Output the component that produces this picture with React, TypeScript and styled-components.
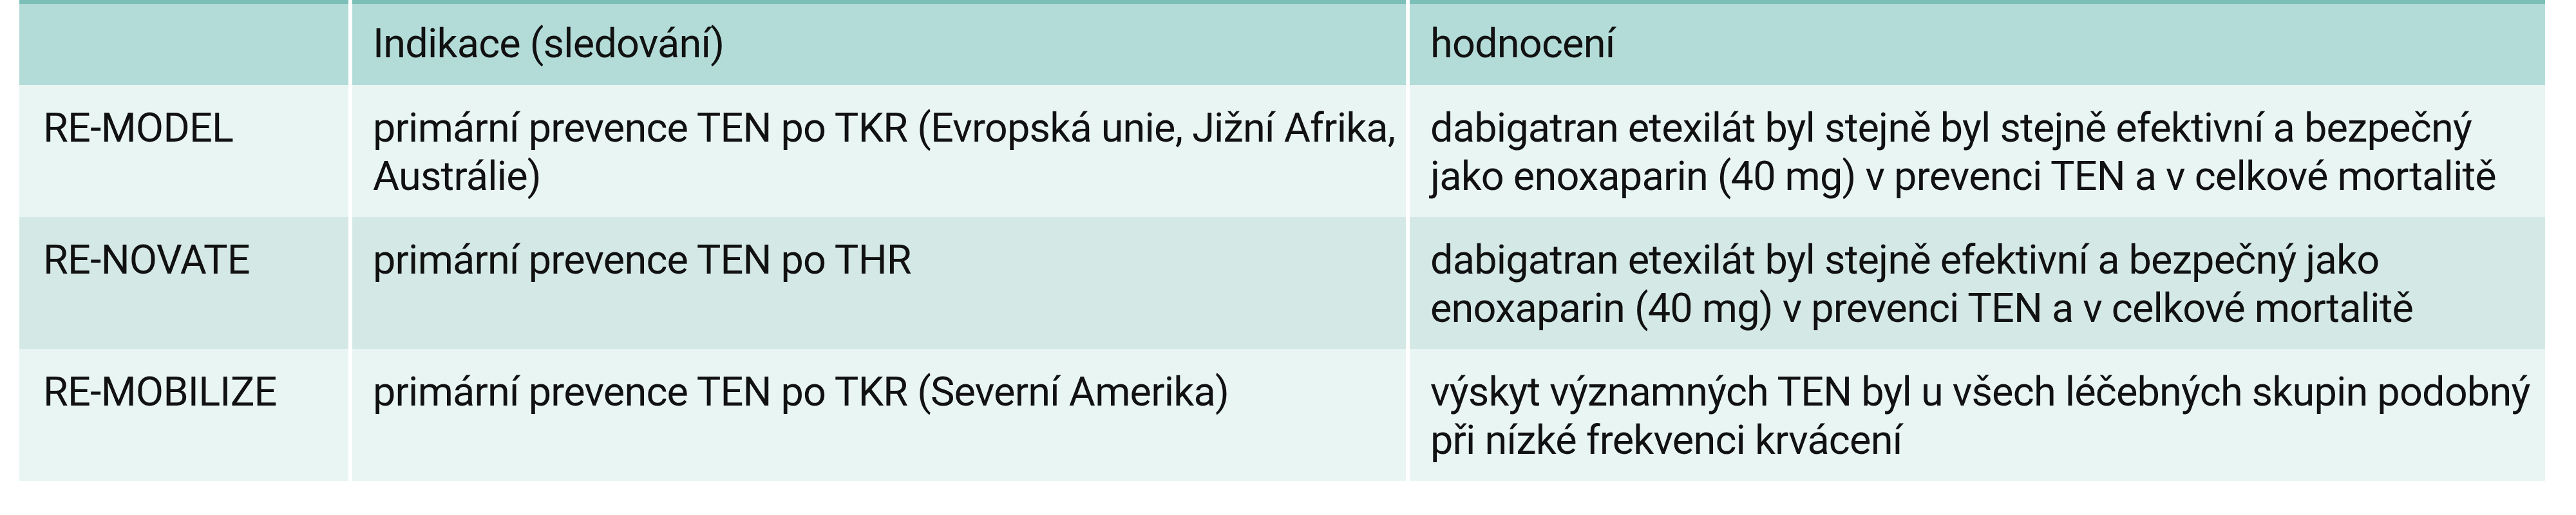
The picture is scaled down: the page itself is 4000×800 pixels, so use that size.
import React from "react";
import styled, { createGlobalStyle } from "styled-components";

const GlobalStyle = createGlobalStyle`
  html, body {
    margin: 0;
    padding: 0;
    background: #ffffff;
  }
`;

const Page = styled.div`
  width: 4000px;
  height: 800px;
  padding-left: 30px;
  box-sizing: border-box;
  font-family: Roboto, "Liberation Sans", sans-serif;
  font-size: 63px;
  letter-spacing: -0.8px;
  line-height: 75px;
  color: #111111;
`;

const Table = styled.div`
  width: 3922px;
  display: flex;
  flex-direction: column;
`;

const Row = styled.div`
  display: grid;
  grid-template-columns: 511px 1636px 1763px;
  column-gap: 6px;
  background: #ffffff;
`;

type Tone = "head" | "light" | "dark";

const tones: Record<Tone, string> = {
  head: "#b3dcd8",
  light: "#e8f5f3",
  dark: "#d4e9e6",
};

const Cell = styled.div<{ $tone: Tone; $first?: boolean }>`
  background: ${(p) => tones[p.$tone]};
  border-top: ${(p) => (p.$tone === "head" ? "6px solid #7cbfb8" : "none")};
  padding: ${(p) => (p.$tone === "head" ? "24px 0 27px" : "29px 0 26px")};
  padding-left: ${(p) => (p.$first ? "37px" : "32px")};
  white-space: nowrap;
`;

interface Trial {
  name: string;
  indication: React.ReactNode;
  result: React.ReactNode;
}

const trials: Trial[] = [
  {
    name: "RE-MODEL",
    indication: (
      <>
        primární prevence TEN po TKR (Evropská unie, Jižní Afrika,
        <br />
        Austrálie)
      </>
    ),
    result: (
      <>
        dabigatran etexilát byl stejně byl stejně efektivní a bezpečný
        <br />
        jako enoxaparin (40 mg) v prevenci TEN a v celkové mortalitě
      </>
    ),
  },
  {
    name: "RE-NOVATE",
    indication: "primární prevence TEN po THR",
    result: (
      <>
        dabigatran etexilát byl stejně efektivní a bezpečný jako
        <br />
        enoxaparin (40 mg) v prevenci TEN a v celkové mortalitě
      </>
    ),
  },
  {
    name: "RE-MOBILIZE",
    indication: "primární prevence TEN po TKR (Severní Amerika)",
    result: (
      <>
        výskyt významných TEN byl u všech léčebných skupin podobný
        <br />
        při nízké frekvenci krvácení
      </>
    ),
  },
];

export default function App() {
  return (
    <Page>
      <GlobalStyle />
      <Table>
        <Row>
          <Cell $tone="head" $first />
          <Cell $tone="head">Indikace (sledování)</Cell>
          <Cell $tone="head">hodnocení</Cell>
        </Row>
        {trials.map((t, i) => {
          const tone: Tone = i % 2 === 0 ? "light" : "dark";
          return (
            <Row key={t.name}>
              <Cell $tone={tone} $first>
                {t.name}
              </Cell>
              <Cell $tone={tone}>{t.indication}</Cell>
              <Cell $tone={tone}>{t.result}</Cell>
            </Row>
          );
        })}
      </Table>
    </Page>
  );
}
